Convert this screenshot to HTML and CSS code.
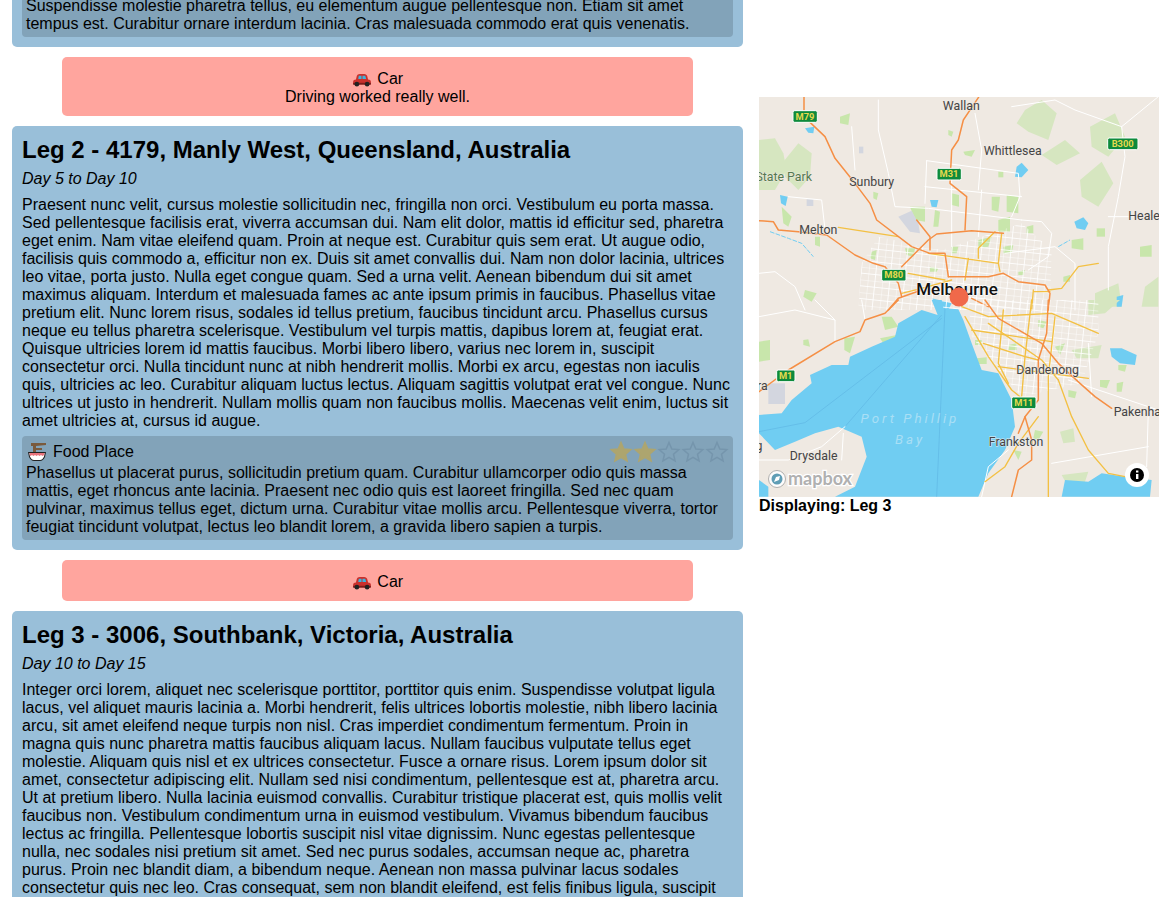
FILE: index.html
```html
<!DOCTYPE html>
<html lang="en">
<head>
    <meta charset="UTF-8">
    <meta name="viewport" content="width=device-width, initial-scale=1.0">
    <title>Trip</title>
    <link rel="stylesheet" href="styles.css">
</head>
<body>
    <svg class="defs" width="0" height="0">
        <defs>
            <g id="car">
                <path fill="#c9302c" d="M1 9 Q1 7 4 7 L5 3 Q5.500 1 8 1 L13 1 Q15 1 16 3 L17 7 Q20 7 20 9 L20 12 L1 12 Z"/>
                <path fill="#3fb2dc" d="M6.500 6.500 L7 3 L10 3 L10 6.500 Z M11 3 L14 3 L15 6.500 L11 6.500 Z"/>
                <rect x="1" y="10.500" width="19" height="2" fill="#7c1d1b"/>
                <circle cx="5" cy="12" r="2.500" fill="#222"/>
                <circle cx="16" cy="12" r="2.500" fill="#222"/>
            </g>
            <polygon id="star" points="12,2.500 14.800,9 21.800,9.600 16.500,14.200 18.100,21 12,17.400 5.900,21 7.500,14.200 2.200,9.600 9.200,9"/>
            <pattern id="streets" width="44" height="38" patternUnits="userSpaceOnUse" patternTransform="rotate(6)">
                <path d="M0 0 H44 M0 19 H44 M0 0 V38 M22 0 V38" fill="none" stroke="#fff" stroke-width="2.500"/>
            </pattern>
        </defs>
    </svg>

    <main class="page">
        <section class="legs">
            <article class="leg">
                <div class="place">
                    <p>Suspendisse molestie pharetra tellus, eu elementum augue pellentesque non. Etiam sit amet tempus est. Curabitur ornare interdum lacinia. Cras malesuada commodo erat quis venenatis.</p>
                </div>
            </article>

            <div class="transport">
                <div class="transport-title"><svg class="car-icon" viewBox="0 0 21 15"><use href="#car"/></svg> Car</div>
                <div>Driving worked really well.</div>
            </div>

            <article class="leg">
                <h2>Leg 2 - 4179, Manly West, Queensland, Australia</h2>
                <div class="days">Day 5 to Day 10</div>
                <p>Praesent nunc velit, cursus molestie sollicitudin nec, fringilla non orci. Vestibulum eu porta massa. Sed pellentesque facilisis erat, viverra accumsan dui. Nam elit dolor, mattis id efficitur sed, pharetra eget enim. Nam vitae eleifend quam. Proin at neque est. Curabitur quis sem erat. Ut augue odio, facilisis quis commodo a, efficitur non ex. Duis sit amet convallis dui. Nam non dolor lacinia, ultrices leo vitae, porta justo. Nulla eget congue quam. Sed a urna velit. Aenean bibendum dui sit amet maximus aliquam. Interdum et malesuada fames ac ante ipsum primis in faucibus. Phasellus vitae pretium elit. Nunc lorem risus, sodales id tellus pretium, faucibus tincidunt arcu. Phasellus cursus neque eu tellus pharetra scelerisque. Vestibulum vel turpis mattis, dapibus lorem at, feugiat erat. Quisque ultricies lorem id mattis faucibus. Morbi libero libero, varius nec lorem in, suscipit consectetur orci. Nulla tincidunt nunc at nibh hendrerit mollis. Morbi ex arcu, egestas non iaculis quis, ultricies ac leo. Curabitur aliquam luctus lectus. Aliquam sagittis volutpat erat vel congue. Nunc ultrices ut justo in hendrerit. Nullam mollis quam non faucibus mollis. Maecenas velit enim, luctus sit amet ultricies at, cursus id augue.</p>
                <div class="place">
                    <div class="place-head">
                        <svg class="food-icon" viewBox="0 0 20 20">
                            <path fill="#7a5a3c" d="M4 1 L19 1 L19 3 L9 4 L9 6 L15 6 L15 8 L9 8 L9 10 L6 10 L6 4 L4 4 Z"/>
                            <path fill="#222" d="M1 10 L19 10 L18 15 Q16 19 13 19 L7 19 Q4 19 2 15 Z"/>
                            <path fill="#fff" d="M2.300 11 L17.700 11 L17 14.500 Q15.500 18 13 18 L7 18 Q4.500 18 3 14.500 Z"/>
                            <path fill="#e8737c" d="M2.500 11 L17.500 11 L17.200 13 L15.500 14 L14 13 L12.500 14 L11 13 L9.500 14 L8 13 L6.500 14 L5 13 L3.500 14 L2.800 13 Z"/>
                        </svg>
                        <span class="place-name">Food Place</span>
                        <div class="stars">
                            <svg class="star star-on" viewBox="0 0 24 24"><use href="#star"/></svg>
                            <svg class="star star-on" viewBox="0 0 24 24"><use href="#star"/></svg>
                            <svg class="star" viewBox="0 0 24 24"><use href="#star"/></svg>
                            <svg class="star" viewBox="0 0 24 24"><use href="#star"/></svg>
                            <svg class="star" viewBox="0 0 24 24"><use href="#star"/></svg>
                        </div>
                    </div>
                    <p>Phasellus ut placerat purus, sollicitudin pretium quam. Curabitur ullamcorper odio quis massa mattis, eget rhoncus ante lacinia. Praesent nec odio quis est laoreet fringilla. Sed nec quam pulvinar, maximus tellus eget, dictum urna. Curabitur vitae mollis arcu. Pellentesque viverra, tortor feugiat tincidunt volutpat, lectus leo blandit lorem, a gravida libero sapien a turpis.</p>
                </div>
            </article>

            <div class="transport">
                <div class="transport-title"><svg class="car-icon" viewBox="0 0 21 15"><use href="#car"/></svg> Car</div>
            </div>

            <article class="leg">
                <h2>Leg 3 - 3006, Southbank, Victoria, Australia</h2>
                <div class="days">Day 10 to Day 15</div>
                <p>Integer orci lorem, aliquet nec scelerisque porttitor, porttitor quis enim. Suspendisse volutpat ligula lacus, vel aliquet mauris lacinia a. Morbi hendrerit, felis ultrices lobortis molestie, nibh libero lacinia arcu, sit amet eleifend neque turpis non nisl. Cras imperdiet condimentum fermentum. Proin in magna quis nunc pharetra mattis faucibus aliquam lacus. Nullam faucibus vulputate tellus eget molestie. Aliquam quis nisl et ex ultrices consectetur. Fusce a ornare risus. Lorem ipsum dolor sit amet, consectetur adipiscing elit. Nullam sed nisi condimentum, pellentesque est at, pharetra arcu. Ut at pretium libero. Nulla lacinia euismod convallis. Curabitur tristique placerat est, quis mollis velit faucibus non. Vestibulum condimentum urna in euismod vestibulum. Vivamus bibendum faucibus lectus ac fringilla. Pellentesque lobortis suscipit nisl vitae dignissim. Nunc egestas pellentesque nulla, nec sodales nisi pretium sit amet. Sed nec purus sodales, accumsan neque ac, pharetra purus. Proin nec blandit diam, a bibendum neque. Aenean non massa pulvinar lacus sodales consectetur quis nec leo. Cras consequat, sem non blandit eleifend, est felis finibus ligula, suscipit</p>
            </article>
        </section>

        <aside class="side">
            <svg class="map" viewBox="0 0 400 400">
                <rect class="land" width="400" height="400"/>

                <!-- north half, coords as zoomed 3x -->
                <g transform="translate(-4,-7) scale(0.33333)">
                    <g class="soft">
                        <g class="hill">
                            <path d="M12 150 L60 145 L85 190 L95 240 L60 300 L12 300 Z"/>
                            <path d="M85 215 L130 160 L170 190 L165 260 L130 300 L90 260 Z"/>
                            <path d="M785 100 L810 60 L860 30 L905 70 L880 150 L820 125 Z"/>
                            <path d="M1005 110 L1080 70 L1110 140 L1060 200 L1010 170 Z"/>
                            <path d="M975 270 L1040 215 L1075 280 L1030 350 L980 320 Z"/>
                            <path d="M860 195 L930 150 L975 190 L905 225 Z"/>
                            <path d="M1020 610 L1090 580 L1100 650 L1020 650 Z"/>
                            <path d="M1170 590 L1210 560 L1210 650 L1160 650 Z"/>
                        </g>
                        <g class="park">
                            <path d="M755 315 L790 320 L790 370 L755 365 Z"/>
                            <path d="M730 390 L765 380 L765 425 L730 425 Z"/>
                            <path d="M710 320 L735 320 L730 365 L710 360 Z"/>
                            <path d="M465 350 L510 350 L510 395 L480 390 Z"/>
                            <path d="M540 360 L555 365 L550 410 L535 410 Z"/>
                            <path d="M590 310 L612 315 L612 350 L590 345 Z"/>
                            <path d="M255 80 L285 70 L280 105 L255 100 Z"/>
                            <path d="M450 475 L480 475 L475 500 L455 495 Z"/>
                            <path d="M150 600 L185 610 L170 635 L145 620 Z"/>
                            <path d="M1155 470 L1190 465 L1190 500 L1155 500 Z"/>
                            <path d="M950 450 L985 445 L985 480 L950 475 Z"/>
                            <path d="M580 120 L595 125 L590 140 L580 135 Z"/>
                            <path d="M625 185 L660 180 L650 200 L630 195 Z"/>
                            <path d="M80 350 L110 380 L100 410 L85 400 Z"/>
                            <path d="M670 450 L710 440 L700 470 L670 475 Z"/>
                            <path d="M590 470 L610 470 L605 490 L590 490 Z"/>
                            <path d="M730 245 L745 245 L745 262 L730 262 Z"/>
                            <path d="M1025 415 L1050 415 L1050 440 L1025 440 Z"/>
                            <path d="M350 485 L365 480 L360 510 L345 505 Z"/>
                            <path d="M180 440 L195 440 L195 470 L180 465 Z"/>
                            <path d="M355 305 L370 310 L365 330 L355 325 Z"/>
                            <path d="M525 530 L550 535 L545 545 L525 545 Z"/>
                            <path d="M790 545 L810 540 L805 555 L790 555 Z"/>
                            <path d="M925 560 L945 555 L945 575 L925 575 Z"/>
                            <path d="M745 470 L775 465 L770 490 L745 490 Z"/>
                            <path d="M815 410 L835 405 L835 430 L815 430 Z"/>
                        </g>
                        <g class="urban">
                            <path d="M430 380 L470 362 L490 400 L495 430 L465 425 Z"/>
                            <path d="M155 328 L175 328 L175 348 L155 348 Z"/>
                            <path d="M312 170 L325 170 L325 190 L312 190 Z"/>
                        </g>
                        <g class="lake">
                            <path d="M785 230 L800 218 L820 240 L800 262 L780 260 Z"/>
                            <path d="M958 395 L985 382 L1000 400 L990 420 L965 415 Z"/>
                            <path d="M525 330 L550 330 L545 352 L530 350 Z"/>
                            <path d="M75 315 L98 320 L92 348 L78 340 Z"/>
                            <path d="M150 115 L178 110 L175 130 L160 128 Z"/>
                            <path d="M1085 620 L1105 615 L1100 650 L1085 650 Z"/>
                            <path d="M530 625 L590 640 L580 660 L545 655 Z"/>
                        </g>
                        <path class="creek" d="M45 425 L100 445 L140 460 L175 500"/>
                        <path class="creek" d="M910 470 L945 450"/>
                        <path class="streets" d="M370 440 L560 480 L800 400 L890 480 L885 660 L310 660 L320 520 Z"/>
                        <g class="road-white">
                            <path d="M370 30 L370 120 L400 250 L420 350 L520 355 L800 390"/>
                            <path d="M515 212 L790 250 L795 320 L770 380"/>
                            <path d="M515 212 L510 340 M590 230 L590 470 M680 300 L670 440 M510 290 L800 320"/>
                            <path d="M290 110 L300 240 M100 320 L200 330 L210 420"/>
                            <path d="M660 70 L680 180 L670 300 M770 50 L900 30 L960 60 L1100 110 L1110 200 L1090 320 L1060 470 L1060 600"/>
                            <path d="M800 390 L860 395 L890 430 L880 500 L820 540"/>
                            <path d="M1060 380 L1210 380 M1100 110 L1210 20"/>
                            <path d="M12 550 L60 545 L120 590 L150 660"/>
                            <path d="M750 490 L900 470 L960 520 L960 660"/>
                        </g>
                        <g class="road-yellow">
                            <path d="M250 412 L430 440"/>
                            <path d="M520 490 L730 520 L735 545 M740 430 L730 520 M720 425 L670 475 L670 505 M640 505 L630 570 M460 550 L570 570 M440 610 L500 595 L590 570"/>
                            <path d="M880 600 L920 595 L970 530 L1030 520 M835 605 L885 605 M835 600 L830 660"/>
                        </g>
                        <g class="road-orange">
                            <path d="M147 20 L147 80 L210 140 L240 205 L300 280 L345 340 L365 390 L470 470 L525 490 L570 490 L580 560"/>
                            <path d="M672 20 L625 90 L610 150 L590 180 L585 280 L635 320 L630 420"/>
                            <path d="M12 392 L55 395 L70 420 L130 425 L215 435 L300 495 L355 520 L390 530 L430 580 L440 620"/>
                            <path d="M440 530 L520 450 L545 432 L650 422 L745 430"/>
                            <path d="M485 390 L525 440 L525 480"/>
                            <path d="M580 560 L700 560 L745 550 L790 575 L870 585 L885 610 L880 660"/>
                            <path d="M400 660 L430 625 L500 600"/>
                            <path d="M650 625 L700 650"/>
                        </g>
                    </g>
                    <rect class="shield" x="114" y="62" width="73" height="35" rx="5"/>
                    <text class="shield-text" x="150" y="89">M79</text>
                    <rect class="shield" x="546" y="235" width="73" height="35" rx="5"/>
                    <text class="shield-text" x="582" y="262">M31</text>
                    <rect class="shield" x="380" y="538" width="73" height="35" rx="5"/>
                    <text class="shield-text" x="416" y="565">M80</text>
                    <rect class="shield" x="1058" y="144" width="91" height="35" rx="5"/>
                    <text class="shield-text" x="1103" y="171">B300</text>
                    <text class="label" x="619" y="59">Wallan</text>
                    <text class="label" x="773" y="194">Whittlesea</text>
                    <text class="label label-park" x="86" y="273">State Park</text>
                    <text class="label" x="350" y="288">Sunbury</text>
                    <text class="label" x="190" y="431">Melton</text>
                    <text class="label label-start" x="1120" y="389">Healesville</text>
                </g>

                <!-- south half, same scale -->
                <g transform="translate(-4,203) scale(0.33333)">
                    <g class="soft">
                        <g class="hill">
                            <path d="M1000 0 L1095 0 L1050 40 L1000 45 Z"/>
                            <path d="M950 150 L1040 135 L1030 175 L965 175 Z"/>
                            <path d="M915 395 L955 385 L960 425 L925 430 Z"/>
                            <path d="M920 525 L1000 515 L985 560 L945 570 Z"/>
                        </g>
                        <g class="park">
                            <path d="M12 125 L45 120 L45 180 L12 185 Z"/>
                            <path d="M380 50 L410 50 L430 80 L390 90 Z"/>
                            <path d="M375 115 L425 105 L415 125 L385 130 Z"/>
                            <path d="M268 115 L300 110 L285 160 L268 150 Z"/>
                            <path d="M145 120 L160 118 L165 140 L145 135 Z"/>
                            <path d="M665 175 L695 172 L695 192 L670 192 Z"/>
                            <path d="M850 60 L875 65 L865 85 L850 80 Z"/>
                            <path d="M900 140 L930 130 L915 165 Z"/>
                            <path d="M1035 240 L1065 240 L1055 265 L1035 260 Z"/>
                            <path d="M840 390 L865 395 L850 420 L835 415 Z"/>
                            <path d="M775 450 L800 455 L790 480 Z"/>
                            <path d="M660 120 L680 120 L680 135 L660 135 Z"/>
                            <path d="M760 135 L785 130 L785 150 L760 150 Z"/>
                            <path d="M1090 195 L1115 195 L1110 215 L1090 210 Z"/>
                            <path d="M1085 250 L1105 245 L1100 275 L1085 275 Z"/>
                            <path d="M940 270 L965 275 L960 295 L940 290 Z"/>
                        </g>
                        <rect class="urban" x="40" y="250" width="50" height="62"/>
                        <path class="water" d="M12 345 L80 340 L110 300 L170 250 L165 225 L230 195 L280 195 L285 170 L350 140 L420 110 L430 70 L500 30 L548 45 L530 0 L560 0 L565 25 L610 28 L625 60 L650 130 L680 210 L730 220 L770 300 L780 380 L750 450 L700 520 L670 590 L240 590 L300 560 L335 470 L320 410 L250 380 L180 400 L120 425 L60 450 L12 400 Z"/>
                        <path class="water" d="M12 540 L40 560 L40 590 L12 590 Z"/>
                        <path class="water" d="M920 590 L930 540 L1000 545 L1040 520 L1110 530 L1190 540 L1185 590 Z"/>
                        <path class="lake" d="M1065 145 L1100 145 L1145 165 L1140 195 L1095 190 L1070 170 Z"/>
                        <g class="ship-lane">
                            <path d="M570 25 L545 590"/>
                            <path d="M560 45 L270 380"/>
                            <path d="M560 55 L150 368 L12 395"/>
                        </g>
                        <path class="streets" d="M640 0 L1030 0 L1030 100 L980 250 L800 290 L720 200 L650 110 Z"/>
                        <g class="road-white">
                            <path d="M12 50 L120 30 L240 60 L240 125 M12 480 L100 480 L200 440 L270 380 M265 400 L260 480"/>
                            <path d="M1000 130 L1010 290 M940 240 L1210 330 M1180 330 L1175 500 M890 490 L1180 440"/>
                            <path d="M180 0 L240 60 M320 0 L330 60"/>
                            <path d="M680 590 L700 500 L760 450"/>
                        </g>
                        <g class="road-yellow">
                            <path d="M620 20 L700 50 L890 40 L1030 100"/>
                            <path d="M630 50 L700 170 L770 270 L795 290"/>
                            <path d="M745 30 L730 190 L760 250"/>
                            <path d="M650 90 L890 125"/>
                            <path d="M685 130 L810 170 L850 180"/>
                            <path d="M830 0 L810 170 L800 290"/>
                            <path d="M900 50 L880 230 L880 590"/>
                            <path d="M730 200 L1000 235"/>
                            <path d="M910 240 L950 350 L1000 450 L1060 520 L1110 530"/>
                            <path d="M850 350 L790 430 L750 500 L690 545"/>
                            <path d="M700 70 L860 180 L910 240"/>
                        </g>
                        <g class="road-orange">
                            <path d="M12 275 L100 210 L240 125 L315 95 L330 60 L390 40 L430 0"/>
                            <path d="M690 0 L730 55 L860 130 L910 190 L975 250 L1020 290 L1070 325"/>
                            <path d="M880 0 L875 100 L850 180 L850 300 L810 350 L830 420 L830 480 L790 510 L770 590"/>
                            <path d="M790 400 L810 350"/>
                        </g>
                    </g>
                    <rect class="shield" x="65" y="210" width="55" height="35" rx="5"/>
                    <text class="shield-text" x="92" y="237">M1</text>
                    <rect class="shield" x="770" y="291" width="73" height="35" rx="5"/>
                    <text class="shield-text" x="806" y="318">M11</text>
                    <text class="label" x="878" y="221">Dandenong</text>
                    <text class="label label-start" x="1076" y="348">Pakenham</text>
                    <text class="label label-halo" x="783" y="439">Frankston</text>
                    <text class="label" x="176" y="479">Drysdale</text>
                    <text class="label" x="22" y="270">ra</text>
                    <text class="label" x="12" y="450">g</text>
                    <text class="label-water" x="465" y="368">Port Phillip</text>
                    <text class="label-water" x="465" y="432">Bay</text>
                </g>

                <text class="label-city" x="198" y="198">Melbourne</text>
                <circle class="pin" cx="200" cy="200" r="9.500"/>

                <circle class="logo-ring" cx="18" cy="382" r="8.500"/>
                <circle class="logo-dot" cx="18" cy="382" r="5.500"/>
                <path class="logo-mark" d="M15 385 L17 380 L21 379 L20 383 Z"/>
                <text class="logo-text" x="29" y="388">mapbox</text>
                <circle class="info-back" cx="378" cy="378" r="12"/>
                <circle class="info-dot" cx="378" cy="378" r="7"/>
                <rect class="info-i" x="377" y="377" width="2.400" height="5"/>
                <rect class="info-i" x="377" y="373.500" width="2.400" height="2"/>
            </svg>
            <div class="displaying">Displaying: Leg 3</div>
        </aside>
    </main>
</body>
</html>
```

FILE: styles.css
```css
html, body {
    height: 100%;
    margin: 0;
    overflow: hidden;
}
body {
    font-family: 'Liberation Sans', Arial, sans-serif;
    font-size: 16px;
    line-height: 18px;
    color: #000;
    background-color: #fff;
}
p {
    margin: 0;
}
.defs {
    display: block;
    height: 0;
}
.page {
    display: flex;
    gap: 16px;
    padding-left: 12px;
    align-items: flex-start;
}
.legs {
    width: 731px;
    flex: none;
    display: flex;
    flex-direction: column;
    gap: 10px;
    margin-top: -17px;
}
.leg {
    background-color: #99bfd9;
    border-radius: 5px;
    padding: 10px;
}
.leg h2 {
    margin: 0 0 7px;
    font-size: 24px;
    line-height: 27px;
    font-weight: bold;
}
.days {
    font-style: italic;
    margin-bottom: 8px;
}
.place {
    background-color: #82a3b9;
    border-radius: 4px;
    padding: 4px;
}
.leg p + .place {
    margin-top: 6px;
}
.place-head {
    display: flex;
    align-items: center;
    height: 24px;
}
.food-icon {
    width: 20px;
    height: 20px;
    margin-left: 1px;
    margin-right: 6px;
}
.place-name {
    flex: 1;
}
.stars {
    display: flex;
}
.star {
    width: 24px;
    height: 24px;
    fill: none;
    stroke: #7595ac;
    stroke-width: 1.500;
}
.star-on {
    fill: #ada56f;
    stroke: #ada56f;
}
.transport {
    margin: 0 50px;
    padding: 10px;
    background-color: #ffa59e;
    border-radius: 5px;
    text-align: center;
}
.transport-title {
    line-height: 23px;
    margin-bottom: -2px;
}
.car-icon {
    width: 20px;
    height: 14px;
    margin-right: 1px;
    vertical-align: -3px;
}

/* map column */
.side {
    width: 400px;
    flex: none;
    padding-top: 97px;
}
.map {
    display: block;
    width: 400px;
    height: 400px;
}
.displaying {
    font-weight: bold;
}
.soft {
    filter: blur(0.4px);
}
.land {
    fill: #efe9e2;
}
.hill path {
    fill: #d6e6c0;
}
.park path {
    fill: #c8e6ab;
}
.urban, .urban path {
    fill: #d3d6df;
}
.lake, .lake path, .water {
    fill: #70cdf2;
}
.creek {
    fill: none;
    stroke: #70cdf2;
    stroke-width: 3;
    stroke-dasharray: 14 4;
}
.streets {
    fill: url(#streets);
}
.ship-lane path {
    fill: none;
    stroke: #5fb6e4;
    stroke-width: 2;
}
.road-white path, .road-yellow path, .road-orange path {
    fill: none;
    stroke-linejoin: round;
    stroke-linecap: round;
}
.road-white path {
    stroke: #fff;
    stroke-width: 3;
}
.road-yellow path {
    stroke: #f3c043;
    stroke-width: 4;
}
.road-orange path {
    stroke: #f58f45;
    stroke-width: 4.500;
}
.shield {
    fill: #0d8a3c;
    stroke: #fff;
    stroke-width: 3;
}
.shield-text {
    font-family: 'Roboto', sans-serif;
    font-weight: bold;
    font-size: 28px;
    fill: #e5d94e;
    text-anchor: middle;
}
.label {
    font-family: 'Roboto', sans-serif;
    font-size: 37px;
    fill: #444;
    text-anchor: middle;
    paint-order: stroke;
    stroke: #efe9e2;
    stroke-width: 3;
}
.label-start {
    text-anchor: start;
}
.label-park {
    fill: #55794f;
}
.label-halo {
    stroke: #e9eef2;
}
.label-water {
    font-family: 'Roboto', sans-serif;
    font-style: italic;
    font-size: 40px;
    letter-spacing: 9px;
    fill: #a9dff5;
    text-anchor: middle;
}
.label-city {
    font-family: 'Roboto', sans-serif;
    font-weight: 500;
    font-size: 17px;
    fill: #111;
    text-anchor: middle;
    paint-order: stroke;
    stroke: #fff;
    stroke-width: 1;
}
.pin {
    fill: #f0694a;
}
.logo-ring {
    fill: #fff;
    stroke: #a9a9a9;
    stroke-width: 1;
    opacity: 0.9;
}
.logo-dot {
    fill: #5f9db5;
}
.logo-mark {
    fill: #fff;
}
.logo-text {
    font-family: 'Lato', sans-serif;
    font-weight: bold;
    font-size: 18px;
    fill: #b0b0b0;
    paint-order: stroke;
    stroke: #fff;
    stroke-width: 2.500;
}
.info-back {
    fill: #fff;
}
.info-dot {
    fill: #000;
}
.info-i {
    fill: #fff;
}
```
